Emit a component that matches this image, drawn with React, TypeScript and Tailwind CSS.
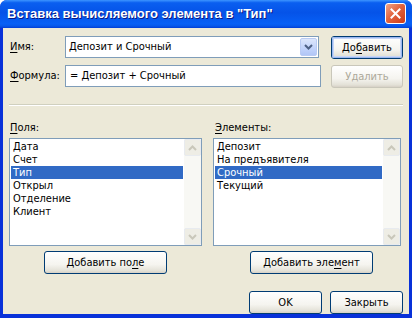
import type { ReactNode } from 'react';

const font = "font-['DejaVu_Sans_Condensed','Liberation_Sans',sans-serif]";

function U({ children }: { children: ReactNode }) {
  return <span className="underline underline-offset-[2px]">{children}</span>;
}

function XpButton({ children, primary, disabled, className = '' }: { children: ReactNode; primary?: boolean; disabled?: boolean; className?: string }) {
  const border = disabled ? 'border-[#c9c7ba] text-[#aca899]' : 'border-[#003c74] text-black';
  return (
    <button
      type="button"
      className={`h-[23px] rounded-[3px] border ${border} bg-[linear-gradient(180deg,#ffffff_0%,#f5f4ef_60%,#e3e1d7_90%,#d6d0c5_100%)] text-[11px] leading-none ${className}`}
    >
      <span
        className={`flex h-full w-full items-center justify-center rounded-[2px] ${primary ? 'shadow-[inset_0_0_0_1px_#9cb8f0,inset_0_0_0_2px_#c6d6f7]' : ''}`}
      >
        {children}
      </span>
    </button>
  );
}

function ScrollBar() {
  const arrow = (up: boolean) => (
    <div className="flex h-[17px] w-[17px] items-center justify-center rounded-[2px] border border-[#e8ebef] bg-[#eeede5]">
      <svg width="9" height="6" viewBox="0 0 9 6">
        <path d={up ? 'M1 5 L4.5 1.5 L8 5' : 'M1 1 L4.5 4.5 L8 1'} fill="none" stroke="#c9c7ba" strokeWidth="2" />
      </svg>
    </div>
  );
  return (
    <div className="flex w-[17px] flex-col justify-between bg-[#f8f8f4]">
      {arrow(true)}
      {arrow(false)}
    </div>
  );
}

function ListBox({ items, selected, width }: { items: string[]; selected: number; width: string }) {
  return (
    <div className={`flex h-[108px] ${width} border border-[#7f9db9] bg-white`}>
      <div className="flex-1 p-[1px]">
        {items.map((item, i) => (
          <div
            key={item}
            className={`h-[13px] pl-[2px] text-[11px] leading-[13px] ${i === selected ? 'bg-[#316ac5] text-white' : 'text-black'}`}
          >
            {item}
          </div>
        ))}
      </div>
      <ScrollBar />
    </div>
  );
}

export default function App() {
  return (
    <div className={`flex h-[318px] w-[412px] flex-col overflow-hidden rounded-t-[7px] bg-[#0831d9] ${font}`}>
      <div className="flex h-[29px] items-center justify-between bg-[linear-gradient(180deg,#3d95ff_0%,#0a5ff0_10%,#0553e8_45%,#0760f6_85%,#0758ea_93%,#003dd7_100%)] pl-[7px] pr-[6px]">
        <span className="font-['Liberation_Sans',sans-serif] text-[13px] font-bold text-white [text-shadow:1px_1px_#0a1883]">
          Вставка вычисляемого элемента в "Тип"
        </span>
        <div className="flex h-[21px] w-[21px] items-center justify-center rounded-[3px] border border-white bg-[linear-gradient(135deg,#f0a58a_0%,#e2653f_45%,#cc3a17_100%)]">
          <svg width="11" height="11" viewBox="0 0 11 11">
            <path d="M1.5 1.5 L9.5 9.5 M9.5 1.5 L1.5 9.5" stroke="white" strokeWidth="2" strokeLinecap="square" />
          </svg>
        </div>
      </div>

      <div className="mx-[3px] mb-[4px] flex flex-1 flex-col bg-[#ece9d8] pl-[6px] pr-[6px] pt-[8px] text-[11px] text-black">
        <div className="flex items-center">
          <div className="w-[56px] pl-[1px]">
            <U>И</U>мя:
          </div>
          <div className="flex h-[22px] w-[254px] items-center border border-[#7f9db9] bg-white p-[1px]">
            <span className="flex-1 pl-[2px]">Депозит и Срочный</span>
            <div className="flex h-[18px] w-[17px] items-center justify-center rounded-[2px] border border-[#b9cbf3] bg-[linear-gradient(180deg,#dce6fb_0%,#c1d3fb_60%,#b1c6f6_100%)]">
              <svg width="9" height="6" viewBox="0 0 9 6">
                <path d="M1 1 L4.5 4.5 L8 1" fill="none" stroke="#4d6185" strokeWidth="2" />
              </svg>
            </div>
          </div>
          <XpButton primary className="ml-[12px] w-[72px]">
            До<U>б</U>авить
          </XpButton>
        </div>

        <div className="mt-[6px] flex items-center">
          <div className="w-[56px] pl-[1px]">
            <U>Ф</U>ормула:
          </div>
          <div className="flex h-[22px] w-[256px] items-center border border-[#7f9db9] bg-white pl-[4px]">= Депозит + Срочный</div>
          <XpButton disabled className="ml-[10px] w-[72px]">
            Удалить
          </XpButton>
        </div>

        <div className="mt-[16px] border-b border-t border-b-white border-t-[#d0d0bf]" />

        <div className="mt-[14px] flex">
          <div className="flex w-[204px] flex-col">
            <div className="pl-[1px]">
              <U>П</U>оля:
            </div>
            <div className="mt-[2px]">
              <ListBox width="w-[193px]" selected={2} items={['Дата', 'Счет', 'Тип', 'Открыл', 'Отделение', 'Клиент']} />
            </div>
            <XpButton className="ml-[35px] mt-[5px] w-[123px]">
              Добавить по<U>л</U>е
            </XpButton>
          </div>
          <div className="flex flex-col">
            <div className="pl-[2px]">
              <U>Э</U>лементы:
            </div>
            <div className="mt-[2px]">
              <ListBox width="w-[188px]" selected={2} items={['Депозит', 'На предъявителя', 'Срочный', 'Текущий']} />
            </div>
            <XpButton className="ml-[37px] mt-[5px] w-[123px]">
              Добавить эле<U>м</U>ент
            </XpButton>
          </div>
        </div>

        <div className="mt-[17px] flex justify-end gap-[8px] pr-[0px]">
          <XpButton className="w-[73px]">OK</XpButton>
          <XpButton className="w-[73px]">Закрыть</XpButton>
        </div>
      </div>
    </div>
  );
}
